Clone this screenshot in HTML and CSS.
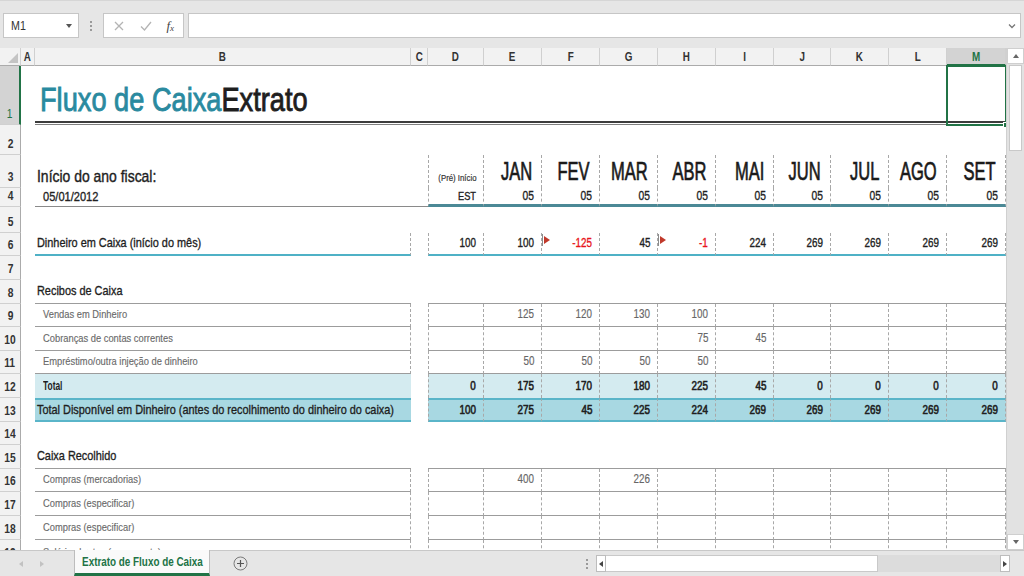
FILE: index.html
```html
<!DOCTYPE html>
<html lang="pt">
<head>
<meta charset="utf-8">
<title>Extrato de Fluxo de Caixa</title>
<link rel="stylesheet" href="styles.css">
</head>
<body>
<div class="app">
  <div class="fbar">
    <div class="namebox"><span class="t">M1</span><span class="caret"></span></div>
    <div class="vdots"><i></i><i></i><i></i></div>
    <div class="fxbox">
      <svg width="12" height="12" viewBox="0 0 12 12"><path d="M2 2L10 10M10 2L2 10" stroke="#b4b4b4" stroke-width="1.3" fill="none"/></svg>
      <svg width="14" height="12" viewBox="0 0 14 12"><path d="M2 6.5L5.5 10L12 2" stroke="#b4b4b4" stroke-width="1.3" fill="none"/></svg>
      <span class="fx">f<sub>x</sub></span>
    </div>
    <div class="finput"><svg class="chev" width="8" height="6" viewBox="0 0 8 6"><path d="M1 1.5L4 4.5L7 1.5" stroke="#777" stroke-width="1.3" fill="none"/></svg></div>
  </div>

  <div class="main">
    <div class="sheet">
      <div class="row hdr">
        <div class="corner"><span class="tri"></span></div>
        <div class="ch"><span class="t">A</span></div><div class="ch"><span class="t">B</span></div><div class="ch"><span class="t">C</span></div><div class="ch"><span class="t">D</span></div>
        <div class="ch"><span class="t">E</span></div><div class="ch"><span class="t">F</span></div><div class="ch"><span class="t">G</span></div><div class="ch"><span class="t">H</span></div>
        <div class="ch"><span class="t">I</span></div><div class="ch"><span class="t">J</span></div><div class="ch"><span class="t">K</span></div><div class="ch"><span class="t">L</span></div>
        <div class="ch sel"><span class="t">M</span></div>
      </div>

      <div class="row r1">
        <div class="rh sel"><span class="t">1</span></div><div class="ca"></div>
        <div class="title"><span class="t"><span class="t1">Fluxo de Caixa</span><span class="t2">Extrato</span></span></div>
        <div class="selbox"><span class="handle"></span></div>
      </div>

      <div class="row r2"><div class="rh"><span class="t">2</span></div></div>

      <div class="row r3 dash">
        <div class="rh"><span class="t">3</span></div><div class="ca"></div><div class="cb lbl-big"><span class="t">Início do ano fiscal:</span></div><div class="cc"></div>
        <div class="n pre"><span class="t">(Pré) Início</span></div>
        <div class="n mon"><span class="t">JAN</span></div><div class="n mon"><span class="t">FEV</span></div><div class="n mon"><span class="t">MAR</span></div><div class="n mon"><span class="t">ABR</span></div>
        <div class="n mon"><span class="t">MAI</span></div><div class="n mon"><span class="t">JUN</span></div><div class="n mon"><span class="t">JUL</span></div><div class="n mon"><span class="t">AGO</span></div><div class="n mon"><span class="t">SET</span></div>
      </div>

      <div class="row r4 dash">
        <div class="rh"><span class="t">4</span></div><div class="ca"></div><div class="cb date"><span class="t">05/01/2012</span></div><div class="cc"></div>
        <div class="n est"><span class="t">EST</span></div>
        <div class="n"><span class="t">05</span></div><div class="n"><span class="t">05</span></div><div class="n"><span class="t">05</span></div><div class="n"><span class="t">05</span></div>
        <div class="n"><span class="t">05</span></div><div class="n"><span class="t">05</span></div><div class="n"><span class="t">05</span></div><div class="n"><span class="t">05</span></div><div class="n"><span class="t">05</span></div>
      </div>

      <div class="row r5"><div class="rh"><span class="t">5</span></div></div>

      <div class="row r6 dash bd">
        <div class="rh"><span class="t">6</span></div><div class="ca"></div><div class="cb lbl"><span class="t">Dinheiro em Caixa (início do mês)</span></div><div class="cc"></div>
        <div class="n"><span class="t">100</span></div><div class="n"><span class="t">100</span></div>
        <div class="n neg"><span class="flag"></span><span class="t">-125</span></div>
        <div class="n"><span class="t">45</span></div>
        <div class="n neg"><span class="flag"></span><span class="t">-1</span></div>
        <div class="n"><span class="t">224</span></div><div class="n"><span class="t">269</span></div><div class="n"><span class="t">269</span></div><div class="n"><span class="t">269</span></div><div class="n"><span class="t">269</span></div>
      </div>

      <div class="row r7"><div class="rh"><span class="t">7</span></div></div>

      <div class="row r8 line">
        <div class="rh"><span class="t">8</span></div><div class="ca"></div><div class="cb lbl"><span class="t">Recibos de Caixa</span></div><div class="cc"></div>
        <div class="n"></div><div class="n"></div><div class="n"></div><div class="n"></div><div class="n"></div>
        <div class="n"></div><div class="n"></div><div class="n"></div><div class="n"></div><div class="n"></div>
      </div>

      <div class="row r9 dash bd line sub">
        <div class="rh"><span class="t">9</span></div><div class="ca"></div><div class="cb"><span class="t">Vendas em Dinheiro</span></div><div class="cc"></div>
        <div class="n"></div><div class="n"><span class="t">125</span></div><div class="n"><span class="t">120</span></div><div class="n"><span class="t">130</span></div><div class="n"><span class="t">100</span></div>
        <div class="n"></div><div class="n"></div><div class="n"></div><div class="n"></div><div class="n"></div>
      </div>

      <div class="row r10 dash bd line sub">
        <div class="rh"><span class="t">10</span></div><div class="ca"></div><div class="cb"><span class="t">Cobranças de contas correntes</span></div><div class="cc"></div>
        <div class="n"></div><div class="n"></div><div class="n"></div><div class="n"></div><div class="n"><span class="t">75</span></div>
        <div class="n"><span class="t">45</span></div><div class="n"></div><div class="n"></div><div class="n"></div><div class="n"></div>
      </div>

      <div class="row r11 dash bd line sub">
        <div class="rh"><span class="t">11</span></div><div class="ca"></div><div class="cb"><span class="t">Empréstimo/outra injeção de dinheiro</span></div><div class="cc"></div>
        <div class="n"></div><div class="n"><span class="t">50</span></div><div class="n"><span class="t">50</span></div><div class="n"><span class="t">50</span></div><div class="n"><span class="t">50</span></div>
        <div class="n"></div><div class="n"></div><div class="n"></div><div class="n"></div><div class="n"></div>
      </div>

      <div class="row r12 dash tot">
        <div class="rh"><span class="t">12</span></div><div class="ca"></div><div class="cb"><span class="t">Total</span></div><div class="cc"></div>
        <div class="n"><span class="t">0</span></div><div class="n"><span class="t">175</span></div><div class="n"><span class="t">170</span></div><div class="n"><span class="t">180</span></div><div class="n"><span class="t">225</span></div>
        <div class="n"><span class="t">45</span></div><div class="n"><span class="t">0</span></div><div class="n"><span class="t">0</span></div><div class="n"><span class="t">0</span></div><div class="n"><span class="t">0</span></div>
      </div>

      <div class="row r13 dash grand">
        <div class="rh"><span class="t">13</span></div><div class="ca"></div><div class="cb lbl"><span class="t">Total Disponível em Dinheiro (antes do recolhimento do dinheiro do caixa)</span></div><div class="cc"></div>
        <div class="n"><span class="t">100</span></div><div class="n"><span class="t">275</span></div><div class="n"><span class="t">45</span></div><div class="n"><span class="t">225</span></div><div class="n"><span class="t">224</span></div>
        <div class="n"><span class="t">269</span></div><div class="n"><span class="t">269</span></div><div class="n"><span class="t">269</span></div><div class="n"><span class="t">269</span></div><div class="n"><span class="t">269</span></div>
      </div>

      <div class="row r14"><div class="rh"><span class="t">14</span></div></div>

      <div class="row r15 line">
        <div class="rh"><span class="t">15</span></div><div class="ca"></div><div class="cb lbl"><span class="t">Caixa Recolhido</span></div><div class="cc"></div>
        <div class="n"></div><div class="n"></div><div class="n"></div><div class="n"></div><div class="n"></div>
        <div class="n"></div><div class="n"></div><div class="n"></div><div class="n"></div><div class="n"></div>
      </div>

      <div class="row r16 dash bd line sub">
        <div class="rh"><span class="t">16</span></div><div class="ca"></div><div class="cb"><span class="t">Compras (mercadorias)</span></div><div class="cc"></div>
        <div class="n"></div><div class="n"><span class="t">400</span></div><div class="n"></div><div class="n"><span class="t">226</span></div><div class="n"></div>
        <div class="n"></div><div class="n"></div><div class="n"></div><div class="n"></div><div class="n"></div>
      </div>

      <div class="row r17 dash bd line sub">
        <div class="rh"><span class="t">17</span></div><div class="ca"></div><div class="cb"><span class="t">Compras (especificar)</span></div><div class="cc"></div>
        <div class="n"></div><div class="n"></div><div class="n"></div><div class="n"></div><div class="n"></div>
        <div class="n"></div><div class="n"></div><div class="n"></div><div class="n"></div><div class="n"></div>
      </div>

      <div class="row r18 dash bd line sub">
        <div class="rh"><span class="t">18</span></div><div class="ca"></div><div class="cb"><span class="t">Compras (especificar)</span></div><div class="cc"></div>
        <div class="n"></div><div class="n"></div><div class="n"></div><div class="n"></div><div class="n"></div>
        <div class="n"></div><div class="n"></div><div class="n"></div><div class="n"></div><div class="n"></div>
      </div>

      <div class="row r19 dash bd sub">
        <div class="rh"><span class="t">19</span></div><div class="ca"></div><div class="cb"><span class="t">Salários brutos (pagamento)</span></div><div class="cc"></div>
        <div class="n"></div><div class="n"></div><div class="n"></div><div class="n"></div><div class="n"></div>
        <div class="n"></div><div class="n"></div><div class="n"></div><div class="n"></div><div class="n"></div>
      </div>
    </div>

    <div class="vscroll">
      <div class="sbtn up"><span class="arr-up"></span></div>
      <div class="vthumb"></div>
      <div class="vtrack"></div>
      <div class="sbtn down"><span class="arr-down"></span></div>
    </div>
  </div>

  <div class="tabbar">
    <div class="nav"><span class="arr-l light"></span><span class="arr-r light"></span></div>
    <div class="tab"><span class="t">Extrato de Fluxo de Caixa</span></div>
    <div class="addtab">
      <svg width="15" height="15" viewBox="0 0 15 15"><circle cx="7.5" cy="7.5" r="6.5" stroke="#7a7a7a" stroke-width="1" fill="none"/><path d="M7.5 4V11M4 7.5H11" stroke="#555" stroke-width="1.2"/></svg>
    </div>
    <div class="spacer"></div>
    <div class="hdots"><i></i><i></i><i></i></div>
    <div class="hscroll">
      <div class="hbtn"><span class="arr-l"></span></div>
      <div class="hthumb"></div>
      <div class="htrack"></div>
      <div class="hbtn"><span class="arr-r"></span></div>
    </div>
  </div>
</div>
</body>
</html>
```

FILE: styles.css
```css
* { box-sizing: border-box; }

html, body {
  margin: 0;
  padding: 0;
  background: #ffffff;
}

body {
  font-family: "Liberation Sans", Arial, sans-serif;
  color: #222;
}

/* condensed text: Liberation Sans compressed to Arial Narrow proportions */
.t {
  display: inline-block;
  line-height: 1;
  white-space: nowrap;
  transform: scaleX(0.82);
  transform-origin: left bottom;
}

.app {
  width: 1024px;
  height: 576px;
  display: flex;
  flex-direction: column;
  overflow: hidden;
}

/* ---------- formula bar ---------- */
.fbar {
  height: 48px;
  background: #e6e6e6;
  display: flex;
  align-items: flex-start;
  padding: 12px 3px 0 3px;
  border-top: 1px solid #d6d6d6;
}

.namebox {
  width: 76px;
  height: 25px;
  background: #fff;
  border: 1px solid #c6c6c6;
  display: flex;
  align-items: center;
  justify-content: space-between;
  padding: 0 6px 0 7px;
  font-size: 13px;
  color: #333;
}

.caret {
  width: 0;
  height: 0;
  border-left: 3px solid transparent;
  border-right: 3px solid transparent;
  border-top: 4px solid #555;
}

.vdots {
  width: 24px;
  height: 25px;
  display: flex;
  flex-direction: column;
  align-items: center;
  justify-content: center;
  gap: 2px;
}
.vdots i, .hdots i {
  display: block;
  width: 2px;
  height: 2px;
  background: #9a9a9a;
}

.fxbox {
  width: 81px;
  height: 25px;
  background: #fff;
  border: 1px solid #c6c6c6;
  display: flex;
  align-items: center;
  justify-content: space-between;
  padding: 0 9px 0 9px;
}

.fx {
  font-family: "Liberation Serif", serif;
  font-style: italic;
  font-size: 13px;
  color: #444;
}
.fx sub {
  font-size: 9px;
  vertical-align: -1px;
}

.finput {
  margin-left: 4px;
  flex: 1;
  height: 25px;
  background: #fff;
  border: 1px solid #c6c6c6;
  display: flex;
  align-items: center;
  justify-content: flex-end;
  padding-right: 4px;
}

/* ---------- sheet ---------- */
.main {
  display: flex;
  height: 502px;
}

.sheet {
  width: 1006px;
  height: 502px;
  overflow: hidden;
  display: flex;
  flex-direction: column;
  position: relative;
}

.row {
  display: grid;
  grid-template-columns: 21px 14px 376px 17px 56px 58px 58px 58px 58px 58px 57px 58px 58px 59px;
  flex: none;
  position: relative;
}

.hdr { height: 18px; background: #f2f2f2; }
.r1 { height: 59px; }
.r2 { height: 30px; }
.r3 { height: 33px; }
.r4 { height: 19px; }
.r5 { height: 26px; }
.r6 { height: 23px; }
.r7 { height: 24px; }
.r8 { height: 24px; }
.r9 { height: 23px; }
.r10 { height: 24px; }
.r11 { height: 23px; }
.r12 { height: 24px; }
.r13 { height: 24px; }
.r14 { height: 23px; }
.r15 { height: 24px; }
.r16 { height: 23px; }
.r17 { height: 24px; }
.r18 { height: 24px; }
.r19 { height: 24px; }

/* column headers */
.corner {
  background: #f2f2f2;
  border-right: 1px solid #d0d0d0;
  border-bottom: 1px solid #ababab;
  position: relative;
}
.tri {
  position: absolute;
  right: 2px;
  bottom: 2px;
  width: 0;
  height: 0;
  border-left: 10px solid transparent;
  border-bottom: 10px solid #c4c4c4;
}
.ch {
  border-right: 1px solid #d0d0d0;
  border-bottom: 1px solid #ababab;
  display: flex;
  align-items: center;
  justify-content: center;
  font-size: 12px;
  font-weight: bold;
  color: #333;
  padding-top: 1px;
}
.ch .t, .rh .t, .tab .t { transform-origin: center bottom; }
.ch.sel {
  background: #d3d3d3;
  color: #217346;
  border-bottom: 2px solid #217346;
}

/* row headers */
.rh {
  grid-column: 1;
  background: #f2f2f2;
  border-right: 1px solid #ababab;
  border-bottom: 1px solid #d0d0d0;
  display: flex;
  align-items: flex-end;
  justify-content: center;
  padding-bottom: 4px;
  font-size: 12.5px;
  font-weight: bold;
  color: #333;
}
.rh.sel {
  background: #d3d3d3;
  color: #217346;
  border-right: 2px solid #217346;
  font-weight: normal;
}

.cb {
  display: flex;
  align-items: flex-end;
  padding: 0 0 6px 8px;
  font-size: 11.4px;
  color: #6a6a6a;
  overflow: visible;
}
.cb .t { -webkit-text-stroke: 0.15px #6a6a6a; }

.n {
  display: flex;
  align-items: flex-end;
  justify-content: flex-end;
  padding: 0 7px 6px 0;
  font-size: 12px;
  color: #222;
}
.n .t {
  transform-origin: right bottom;
  -webkit-text-stroke: 0.35px currentColor;
}

/* title */
.title {
  grid-column: 3 / 15;
  display: flex;
  align-items: flex-end;
  padding: 0 0 5px 5px;
  border-bottom: 2px solid #3c3c3c;
  box-shadow: 0 1px 0 #fff, 0 2px 0 #808080;
  margin-bottom: 2px;
  font-size: 34px;
}
.title .t {
  transform: scaleX(0.8);
}
.t1 { color: #2a8a9f; -webkit-text-stroke: 0.9px #2a8a9f; }
.t2 { color: #1e1e1e; -webkit-text-stroke: 0.9px #1e1e1e; }

.selbox {
  position: absolute;
  left: 946px;
  top: -1px;
  width: 61px;
  height: 61px;
  border: 2px solid #217346;
}
.handle {
  position: absolute;
  right: -4px;
  bottom: -4px;
  width: 6px;
  height: 6px;
  background: #217346;
  border: 1px solid #fff;
}

/* rows 3/4 */
.lbl-big {
  font-size: 17px;
  color: #1e1e1e;
  padding: 0 0 3px 2px;
}
.lbl-big .t { -webkit-text-stroke: 0.4px #1e1e1e; }
.r3 .n { padding-bottom: 4px; }
.mon {
  font-size: 25px;
  color: #1a1a1a;
  padding-right: 9px !important;
}
.mon .t {
  transform: scaleX(0.66);
  -webkit-text-stroke: 0.7px #1a1a1a;
}
.pre {
  font-size: 9.5px;
  color: #333;
  padding-bottom: 6px !important;
}
.pre .t { -webkit-text-stroke: 0.2px #333; }
.date {
  font-size: 13.5px;
  color: #222;
  padding: 0 0 3px 8px;
}
.date .t { -webkit-text-stroke: 0.35px #222; }
.r4 .n {
  font-size: 12.5px;
  padding-bottom: 2px;
  border-bottom: 3px solid #4b8996;
}
.r4 .cb { border-bottom: 1px solid #8a8a8a; }
.r4 .cc { border-bottom: 1px solid #8a8a8a; }
.est { font-size: 11.3px !important; }

/* dashed verticals */
.dash .n { border-right: 1px dashed #a8a8a8; }
.dash .n:nth-child(5) { border-left: 1px dashed #a8a8a8; }
.bd .cb { border-right: 1px dashed #a8a8a8; }

.lbl {
  font-size: 13.3px;
  color: #1e1e1e;
  padding-left: 2px;
}
.lbl .t { -webkit-text-stroke: 0.35px #1e1e1e; }

/* row 6 */
.r6 .cb, .r6 .n { border-bottom: 2px solid #4fb1c6; padding-bottom: 5px; }
.neg { color: #e8141b; }
.flag {
  margin-right: auto;
  align-self: center;
  display: flex;
  align-items: center;
  height: 12px;
  margin-top: -2px;
  border-left: 1px solid #8c8c8c;
  padding-left: 1px;
}
.flag::after {
  content: "";
  width: 0;
  height: 0;
  border-top: 4px solid transparent;
  border-bottom: 4px solid transparent;
  border-left: 6px solid #c0392b;
}

/* lined table rows */
.line .cb, .line .n { border-bottom: 1px solid #9c9c9c; }
.sub .cb { padding-left: 8px; }
.sub .n { color: #666; }
.sub .n .t { -webkit-text-stroke: 0.15px #666; }

/* totals */
.tot .cb, .tot .n {
  background: #d4ebf0;
  color: #1e1e1e;
}
.tot .n .t, .grand .n .t { -webkit-text-stroke: 0.6px #1e1e1e; }
.tot .cb { font-weight: bold; font-size: 12px; }
.tot .cb .t { transform: scaleX(0.7); -webkit-text-stroke: 0; }
.grand .cb, .grand .n {
  background: #a8d8e2;
  border-top: 2px solid #5ab5c9;
  border-bottom: 2px solid #5ab5c9;
  padding-bottom: 4px;
}
.grand .cb { padding-left: 2px; }

/* ---------- vertical scroll ---------- */
.vscroll {
  width: 18px;
  height: 502px;
  background: #e2e2e2;
  border-left: 1px solid #d0d0d0;
  display: flex;
  flex-direction: column;
}
.sbtn {
  height: 16px;
  background: #fff;
  border: 1px solid #cfcfcf;
  display: flex;
  align-items: center;
  justify-content: center;
}
.vthumb {
  height: 86px;
  margin: 1px 2px 0 2px;
  background: #fff;
  border: 1px solid #c9c9c9;
}
.vtrack { flex: 1; }
.arr-up {
  width: 0; height: 0;
  border-left: 3px solid transparent;
  border-right: 3px solid transparent;
  border-bottom: 4px solid #666;
}
.arr-down {
  width: 0; height: 0;
  border-left: 3px solid transparent;
  border-right: 3px solid transparent;
  border-top: 4px solid #666;
}

/* ---------- tab bar ---------- */
.tabbar {
  height: 26px;
  background: #e6e6e6;
  border-top: 1px solid #c8c8c8;
  display: flex;
  align-items: stretch;
}
.nav {
  width: 74px;
  display: flex;
  align-items: center;
  gap: 17px;
  padding-left: 19px;
}
.arr-l {
  display: block;
  width: 0; height: 0;
  border-top: 3px solid transparent;
  border-bottom: 3px solid transparent;
  border-right: 4px solid #444;
}
.arr-r {
  display: block;
  width: 0; height: 0;
  border-top: 3px solid transparent;
  border-bottom: 3px solid transparent;
  border-left: 4px solid #444;
}
.arr-l.light { border-right-color: #c2c2c2; }
.arr-r.light { border-left-color: #c2c2c2; }

.tab {
  width: 136px;
  margin-top: -1px;
  background: #fafafa;
  border-left: 1px solid #bdbdbd;
  border-right: 1px solid #bdbdbd;
  border-bottom: 3px solid #217346;
  display: flex;
  align-items: center;
  justify-content: center;
  font-size: 12.5px;
  font-weight: bold;
  color: #217346;
  padding-top: 1px;
}
.tab .t { transform: scaleX(0.79); }
.addtab {
  width: 60px;
  display: flex;
  align-items: center;
  justify-content: center;
}
.spacer { flex: 1; }
.hdots {
  width: 18px;
  display: flex;
  flex-direction: column;
  align-items: center;
  justify-content: center;
  gap: 2px;
}
.hscroll {
  width: 428px;
  display: flex;
  align-items: center;
  padding-right: 14px;
}
.hbtn {
  width: 10px;
  height: 17px;
  background: #fff;
  border: 1px solid #bdbdbd;
  display: flex;
  align-items: center;
  justify-content: center;
}
.hthumb {
  width: 272px;
  height: 17px;
  background: #fff;
  border: 1px solid #c9c9c9;
  border-left: none;
}
.htrack {
  flex: 1;
  height: 17px;
  background: #dcdcdc;
}
```
